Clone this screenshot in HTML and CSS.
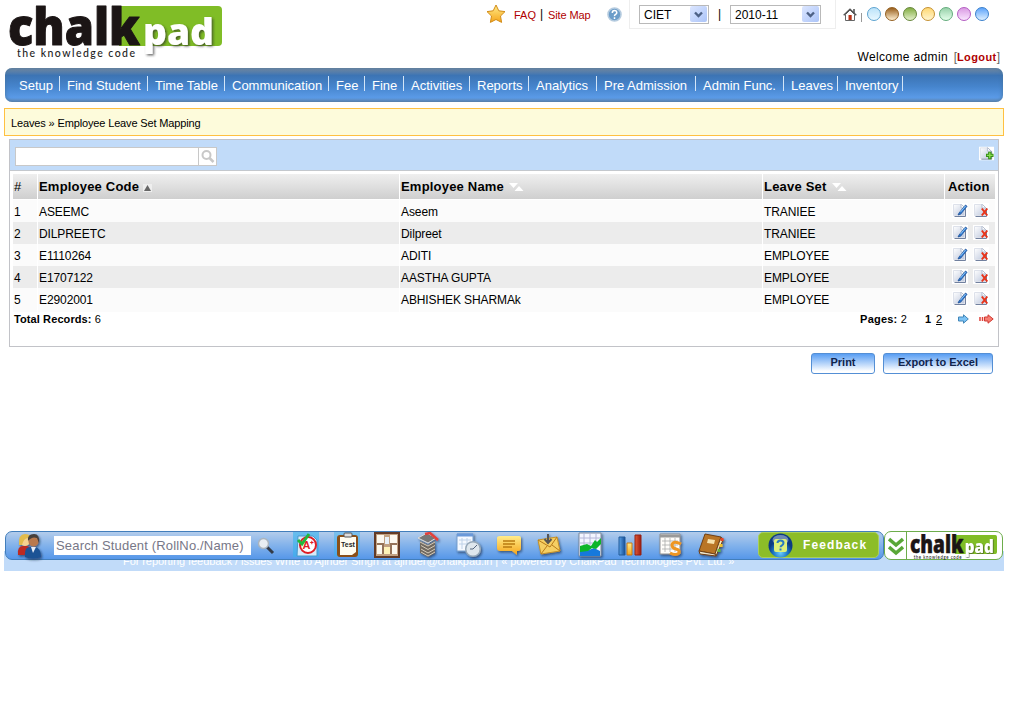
FILE: index.html
```html
<!DOCTYPE html>
<html lang="en">
<head>
<meta charset="utf-8">
<title>Employee Leave Set Mapping</title>
<link rel="stylesheet" href="styles.css">
</head>
<body>
<svg class="defs" aria-hidden="true">
  <defs>
    <linearGradient id="sheet" x2="1" y2="1"><stop stop-color="#fff"/><stop offset="1" stop-color="#bcc6dc"/></linearGradient>
    <linearGradient id="gold" x2="0" y2="1"><stop stop-color="#ffec8a"/><stop offset="1" stop-color="#f6a51a"/></linearGradient>
    <linearGradient id="red" x2="1" y2="0"><stop stop-color="#e05a38"/><stop offset="1" stop-color="#9c1c10"/></linearGradient>
    <linearGradient id="blue" x2="1" y2="0"><stop stop-color="#5ba4e8"/><stop offset="1" stop-color="#164d96"/></linearGradient>
    <radialGradient id="orb" cx=".5" cy=".8"><stop stop-color="#6dd0ff"/><stop offset=".6" stop-color="#1b75c5"/><stop offset="1" stop-color="#0c3b83"/></radialGradient>
    <filter id="shade" x="-20%" y="-20%" width="150%" height="150%"><feDropShadow dx="1.2" dy="1.5" stdDeviation="1" flood-color="#123" flood-opacity=".6"/></filter>
    <filter id="lift" x="-10%" y="-10%" width="130%" height="130%"><feDropShadow dx="1.5" dy="1.500" stdDeviation="1" flood-color="#222" flood-opacity=".65"/></filter>
  </defs>
  <symbol id="page" viewBox="0 0 16 15"><path fill="#fff" d="M0 0h16v15H0z"/><path d="M1.500 1.500h8l3 3v8H1.500z" fill="url(#sheet)" stroke="#dde1ea"/><path d="M9.500 1.500l4 4v8H2.500" fill="none" stroke="#71809e"/><path d="M9 1v4h4" fill="#fff" stroke="#b3bdd0"/></symbol>
  <symbol id="edit" viewBox="0 0 16 15"><use href="#page" width="16" height="15"/><path d="M7 10l6.500-8 1.600 1.300L8.700 11.200 6 12z" fill="#2f78cf" stroke="#174a92" stroke-width=".7"/><path d="M8.500 9l5-6" stroke="#8cc8fa"/></symbol>
  <symbol id="delete" viewBox="0 0 16 15"><use href="#page" width="16" height="15"/><path d="M8.800 5.500l5.500 7M14.300 5.500l-5.500 7" stroke="#e9341a" stroke-width="2"/></symbol>
  <symbol id="sort" viewBox="0 0 15 8"><path d="M0 0h9L4.500 5zM5.500 8l4.500-5 4.500 5z" fill="#fff"/></symbol>
  <symbol id="logo" viewBox="0 0 214 57">
    <path d="M111 2h99q4 0 4 4v32q0 4-4 4H111z" fill="#80bd26"/>
    <g font-family="Open Sans, sans-serif" font-weight="800" stroke-linejoin="round">
      <text x="0" y="41" font-size="51" textLength="132" lengthAdjust="spacingAndGlyphs" fill="#1b1515" stroke="#1b1515" stroke-width="1">chalk</text>
      <text x="135" y="41" font-size="37" textLength="71" lengthAdjust="spacingAndGlyphs" fill="#fff" filter="url(#lift)">pad</text>
    </g>
    <text x="9" y="53" font-family="Lato, sans-serif" font-weight="500" font-size="10.500" textLength="118" fill="#222">the knowledge code</text>
  </symbol>
</svg>

<div class="page">
  <header class="top">
    <svg class="logo"><use href="#logo"/></svg>
    <div class="account">
      <div class="tools">
        <svg class="star" viewBox="0 0 20 20"><path d="M10 1l2.800 5.800 6.200.8-4.500 4.400 1.100 6.400L10 15.500 4.400 18.400l1.100-6.400L1 7.600l6.200-.8z" fill="url(#gold)" stroke="#d28c18" stroke-linejoin="round"/></svg>
        <a class="faq">FAQ</a><span class="bar">|</span><a class="sitemap">Site Map</a>
        <svg class="help" viewBox="0 0 15 15"><circle cx="7.500" cy="7.500" r="6.500" fill="#6c9dc9" stroke="#b5cbdf" stroke-width="1.600"/><path d="M5.300 6q0-2.500 2.200-2.500T9.800 5.700q0 1-1.200 1.700T7.500 9.100M7.500 10.300v1.600" fill="none" stroke="#fff" stroke-width="1.500"/></svg>
        <div class="session">
          <span class="select select-college">CIET<i><svg viewBox="0 0 17 17"><path d="M5 6.500l3.500 3.500L12 6.500" fill="none" stroke="#4d6185" stroke-width="2.400"/></svg></i></span>
          <b class="divider">|</b>
          <span class="select select-year">2010-11<i><svg viewBox="0 0 17 17"><path d="M5 6.500l3.500 3.500L12 6.500" fill="none" stroke="#4d6185" stroke-width="2.400"/></svg></i></span>
        </div>
        <svg class="home" viewBox="0 0 14 14"><path d="M10 1h2v4h-2z" fill="#777"/><path d="M2.500 6.500v6h9v-6L7 2z" fill="#fff" stroke="#666"/><path d="M.7 7.300L7 1.200l6.300 6.100" fill="none" stroke="#555" stroke-width="1.400"/><path d="M5.500 7h3.200v5H5.500z" fill="#b83319"/></svg>
        <span class="tick"></span>
        <div class="themes"><i class="sky"></i><i class="brown"></i><i class="olive"></i><i class="amber"></i><i class="mint"></i><i class="violet"></i><i class="azure"></i></div>
      </div>
      <div class="welcome">Welcome admin <span>[<b>Logout</b>]</span></div>
    </div>
  </header>

  <nav class="menu"><a>Setup</a><a>Find Student</a><a>Time Table</a><a>Communication</a><a>Fee</a><a>Fine</a><a>Activities</a><a>Reports</a><a>Analytics</a><a>Pre Admission</a><a>Admin Func.</a><a>Leaves</a><a>Inventory</a></nav>
  <div class="crumbs">Leaves » Employee Leave Set Mapping</div>

  <main class="panel">
    <div class="toolbar">
      <div class="search"><span></span><svg viewBox="0 0 17 17"><circle cx="7.500" cy="7" r="4" fill="none" stroke="#c8c8c8" stroke-width="2"/><path d="M10.500 10l4 4" stroke="#c8c8c8" stroke-width="2.500"/></svg></div>
      <svg class="add" viewBox="0 0 16 15"><use href="#page" width="16" height="15"/><path d="M11.500 5.500v8M7.500 9.500h8" stroke="#358e16" stroke-width="3.500"/><path d="M11.500 6.500v6M8.500 9.500h6" stroke="#8be052" stroke-width="1.400"/></svg>
    </div>
    <div class="grid">
      <div class="row head"><span class="hash">#</span><span>Employee Code <svg class="asc" viewBox="0 0 9 8"><path fill="#eee" d="M0 0h9v8H0z"/><path d="M4.500 1L8 7H1z" fill="#666"/></svg></span><span>Employee Name <svg class="sort"><use href="#sort"/></svg></span><span>Leave Set <svg class="sort"><use href="#sort"/></svg></span><span class="action">Action</span></div>
      <div class="row"><span>1</span><span>ASEEMC</span><span>Aseem</span><span>TRANIEE</span><span class="acts"><svg><use href="#edit"/></svg><svg><use href="#delete"/></svg></span></div>
      <div class="row"><span>2</span><span>DILPREETC</span><span>Dilpreet</span><span>TRANIEE</span><span class="acts"><svg><use href="#edit"/></svg><svg><use href="#delete"/></svg></span></div>
      <div class="row"><span>3</span><span>E1110264</span><span>ADITI</span><span>EMPLOYEE</span><span class="acts"><svg><use href="#edit"/></svg><svg><use href="#delete"/></svg></span></div>
      <div class="row"><span>4</span><span>E1707122</span><span>AASTHA GUPTA</span><span>EMPLOYEE</span><span class="acts"><svg><use href="#edit"/></svg><svg><use href="#delete"/></svg></span></div>
      <div class="row"><span>5</span><span>E2902001</span><span>ABHISHEK SHARMAk</span><span>EMPLOYEE</span><span class="acts"><svg><use href="#edit"/></svg><svg><use href="#delete"/></svg></span></div>
    </div>
    <div class="paging">
      <div class="total"><b>Total Records:</b> 6</div>
      <div class="pages"><b>Pages:</b> 2</div><b class="current">1</b><u>2</u>
      <svg class="next" viewBox="0 0 11 10"><path d="M.5 3h5V.8L10.300 5 5.500 9.200V7h-5z" fill="#7cc3f5" stroke="#4286b8"/></svg>
      <svg class="last" viewBox="0 0 15 10"><path d="M1 3v4M3.500 3v4" stroke="#df4038" stroke-width="1.500"/><path d="M5.500 3H9V.8L14.200 5 9 9.200V7H5.500z" fill="#f77d72" stroke="#d03a32"/></svg>
    </div>
  </main>
  <div class="buttons"><button class="print">Print</button><button class="export">Export to Excel</button></div>

  <footer class="footer">
    <p>For reporting feedback / issues Write to Ajinder Singh at ajinder@chalkpad.in | « powered by ChalkPad Technologies Pvt. Ltd. »</p>
    <div class="dock">
      <div class="dockbar">
        <svg class="people" viewBox="0 0 26 26" filter="url(#shade)"><path d="M1 22q-1-9 5-9h4q5 1 5 9z" fill="#bd2923"/><circle cx="8" cy="8" r="5" fill="#f5d391"/><path d="M2 12Q1 1 8 1t7 8l-3-4Q7 4 5 12z" fill="#e2bc4e"/><path d="M8 24q-1-10 5-10h5q6 1 6 10-8 3-16 0z" fill="#1f5295"/><circle cx="16.500" cy="8.500" r="5" fill="#b9794d"/><path d="M11 8q-1-7 6-7 6 0 5 9l-2-5q-5-2-9 3z" fill="#453f3c"/><path d="M14 14l2 6 3-6z" fill="#e8edf5"/></svg>
        <div class="find">Search Student (RollNo./Name)</div>
        <svg class="lens" viewBox="0 0 18 18"><path d="M10 10l6 6" stroke="#333b48" stroke-width="3"/><circle cx="6.500" cy="6.500" r="5" fill="#e9eef2" stroke="#aab4be" stroke-width="1.500"/></svg>
        <div class="apps">
          <svg viewBox="0 0 26 26"><path d="M0 0h26v25H0z" fill="#37b4ef" opacity=".6"/><path d="M5 4h15l4 4v16H4z" fill="#d6eaf8" stroke="#4b96ca"/><circle cx="15" cy="13" r="8" fill="#fff" stroke="#df1d24" stroke-width="2"/><text x="9.500" y="17" class="grade">A⁺</text><path d="M5 8l4 4 7-10" fill="none" stroke="#20b83b" stroke-width="3"/></svg>
          <svg viewBox="0 0 26 26"><path d="M0 0h26v25H0z" fill="#37b4ef" opacity=".45"/><rect x="3" y="3" width="21" height="22" rx="3" fill="#8a4f17"/><path d="M6 5h16v15l-4 3H6z" fill="#fffdf0"/><rect x="10" y="1" width="8" height="4" rx="1" fill="#ddd" stroke="#555"/><text x="7" y="14.500" class="test">Test</text></svg>
          <svg viewBox="0 0 26 26"><path d="M1 1h24v24H1z" fill="#c2a283" stroke="#623b28" stroke-width="2"/><path d="M3 3h7v8H3zM16 3h7v8h-7zM3 13h5v9H3zM18 13h5v9h-5z" fill="#fcf8ef"/><path d="M11 5h4v7h-4z" fill="#e9f2fa"/><path d="M10 15h6v7h-6z" fill="#fff3b8"/><path d="M3 12h7M16 12h7M9 13v9M17 13v9" stroke="#66432f"/></svg>
          <svg viewBox="0 0 26 26" filter="url(#shade)"><path d="M3 6l9-5 9 5-8 5z" fill="#777" stroke="#ddd"/><path d="M5 9l8 4 7-4v12l-7 4-8-4z" fill="#71695f"/><path d="M5 10l8 4 7-4M6 13.500l7 4 7-4M6 17l7 4 7-4M6 20l7 4 7-4" fill="none" stroke="#d5cbbb"/><path d="M10 2l5-1 8 7" fill="none" stroke="#e4403b" stroke-width="2.500"/></svg>
          <svg viewBox="0 0 26 26" filter="url(#shade)"><path d="M2 2h16v17H2z" fill="#f5f9ff" stroke="#779fcf"/><path d="M2 3h16" stroke="#6a99d9" stroke-width="3"/><path d="M4 8h12M4 12h12M7 6v11M12 6v11" stroke="#bfd2e8"/><circle cx="18" cy="17" r="7.300" fill="#dfe7ed" stroke="#96a8b8" stroke-width="1.500"/><path d="M18 17l4-4M18 17h-3" stroke="#52647b"/></svg>
          <svg viewBox="0 0 26 26" filter="url(#shade)"><path d="M4 4h19q2 0 2 2v10q0 3-3 3h-1v4l-5-4H4q-3 0-3-3V6q0-2 3-2z" fill="url(#gold)"/><path d="M7 9h12M7 12h12M7 15h9" stroke="#b97b12" stroke-width="1.300"/></svg>
          <svg viewBox="0 0 26 26" filter="url(#shade)"><path d="M2 8l19-3 3 14-19 3z" fill="#f5cf63" stroke="#c69127"/><path d="M2 8l12 7 7-10M5 22l6-8M24 19l-8-6" fill="none" stroke="#b87a19"/><path d="M12 2v8M8.500 7l3.500 4 3.500-4" fill="none" stroke="#555" stroke-width="2"/></svg>
          <svg viewBox="0 0 26 26" filter="url(#shade)"><path d="M2 1h22v23H2z" fill="#f3f5ff" stroke="#7a8a9e"/><path d="M7 1v12M13 1v12M19 1v12M2 6h22M2 11h22" stroke="#b4b6d7"/><path d="M3 19l9-1 5-2 6 3v5H3z" fill="#1479dc"/><path d="M3 14l7-2 4 2 4-6 2 2 4-4v6l-5 5-4-1-4 3-8 1z" fill="#0bb52b"/></svg>
          <svg viewBox="0 0 26 26"><path d="M2 5h6v18H2z" fill="url(#blue)" stroke="#225a98"/><path d="M10 11h5v12h-5z" fill="url(#gold)" stroke="#c77917"/><path d="M18 3h6v20h-6z" fill="url(#red)" stroke="#922014"/></svg>
          <svg viewBox="0 0 26 26" filter="url(#shade)"><path d="M2 2h20v20H2z" fill="#fffdfa" stroke="#8d8e91"/><path d="M2 4h20" stroke="#999" stroke-width="3"/><path d="M4 9h16M4 13h16M4 17h16M7 6v14M12 6v14M17 6v14" stroke="#aaa" stroke-width=".8"/><path d="M23 12q-8-4-9 1 0 3 4 4t3 4q-3 3-9 0" fill="none" stroke="#ee9622" stroke-width="3"/></svg>
          <svg viewBox="0 0 26 26" filter="url(#shade)"><path d="M7 2l16 3-6 17-16-3z" fill="#b97525" stroke="#704014"/><path d="M17 22l1 2 7-16-2-3z" fill="#f3e8c4" stroke="#704014"/><path d="M1 19l1 3 16 2-1-2z" fill="#eee5cc" stroke="#704014"/><path d="M10 7l7 1-1 4-7-1z" fill="#f8e2ac"/><path d="M24 6v3" stroke="#e64427" stroke-width="3"/><path d="M23 12v3" stroke="#f0c12d" stroke-width="3"/><path d="M21 17v3" stroke="#62b43c" stroke-width="3"/></svg>
        </div>
        <div class="feedback"><svg viewBox="0 0 25 26"><circle cx="12.500" cy="12.500" r="12" fill="url(#orb)"/><ellipse cx="12.500" cy="7" rx="8" ry="5" fill="#fff" opacity=".4"/><rect x="6" y="6" width="13" height="13" rx="2" fill="#dcf07c"/><path d="M9.500 10q0-2.500 3-2.500t3 2.500q0 1.500-1.500 2.300t-1.500 2M12.500 15.500v2" fill="none" stroke="#287cc1" stroke-width="2"/></svg>Feedback</div>
      </div>
      <div class="brand"><svg class="chevrons" viewBox="0 0 16 20"><path d="M1 3l7 6 7-6M1 11l7 6 7-6" fill="none" stroke="#59a737" stroke-width="3.500"/></svg><div class="minilogo"><svg viewBox="0 0 214 57" preserveAspectRatio="none"><use href="#logo" width="214" height="57"/></svg></div></div>
    </div>
  </footer>
</div>
</body>
</html>
```
FILE: styles.css
```css
* { box-sizing: border-box; }
body { margin: 0; background: #fff; font: 12px "Liberation Sans", Arial, sans-serif; color: #000; }
svg { display: block; flex: none; }
.defs { position: absolute; width: 0; height: 0; }
.page { width: 1020px; height: 718px; overflow: hidden; }

.top { display: flex; height: 68px; padding: 4px 0 0 8px; }
.logo { width: 214px; height: 57px; }
.account { width: 534px; margin: -4px 0 0 264px; }
.tools { display: flex; height: 29px; align-items: flex-start; }
.star { width: 20px; height: 20px; margin-top: 4px; }
.tools a { font-size: 11px; letter-spacing: -.1px; color: #b00000; margin-top: 9px; white-space: nowrap; line-height: 13px; }
.tools .faq { width: 26px; margin-left: 8px; letter-spacing: 0; }
.bar { width: 8px; margin-top: 8px; line-height: 13px; }
.sitemap { width: 59px; }
.help { width: 15px; height: 15px; margin-top: 7px; }
.session { display: flex; width: 207px; height: 29px; margin-left: 7px; padding: 5px 0 0 9px; border: 1px solid #eee; border-top: 0; }
.select { display: flex; justify-content: space-between; height: 19px; padding: 0 1px 1px 4px; border: 1px solid #b9b9b9; line-height: 18px; }
.select-college { width: 70px; }
.select-year { width: 91px; }
.select i { width: 17px; height: 16px; border-radius: 2px; background: linear-gradient(135deg, #dce6ff, #abc4f8); }
.divider { width: 21px; text-align: center; font-weight: 400; line-height: 19px; }
.home { width: 14px; height: 14px; margin: 8px 0 0 7px; }
.tick { width: 1px; height: 9px; margin: 13px 5px 0 4px; background: #999; }
.themes { display: flex; gap: 4px; margin-top: 7px; }
.themes i { width: 14px; height: 14px; border: 1px solid; border-radius: 50%; }
.sky { color: #5ca3d0; background: linear-gradient(#bce3f9, #e9f8ff); }
.brown { color: #946020; background: linear-gradient(#985e1c, #fff0d2); }
.olive { color: #66863a; background: linear-gradient(#82ad42, #e4f0cc); }
.amber { color: #c59030; background: linear-gradient(#ffd873, #fff5cf); }
.mint { color: #62ac7b; background: linear-gradient(#98d1aa, #e4ffeb); }
.violet { color: #b35cc2; background: linear-gradient(#da9be3, #fae5ff); }
.azure { color: #397fcc; background: linear-gradient(#5da4fb, #def0ff); }
.welcome { width: 514px; margin-top: 21px; text-align: right; font-size: 12px; letter-spacing: .36px; line-height: 15px; white-space: nowrap; }
.welcome span { margin-left: 2px; color: #666; letter-spacing: 0; }
.welcome b { color: #b00000; font-size: 11px; letter-spacing: .4px; }

.menu { display: grid; grid-template-columns: 48px 88px 77px 104px 36px 39px 66px 59px 68px 99px 88px 54px 65px; width: 998px; height: 34px; margin-left: 5px; padding: 8px 0 0 7px; border-radius: 7px; background: linear-gradient(#778ba0, #3c74b4 22%, #4685cd 55%, #5b9be8 88%, #668bb5); box-shadow: inset 0 0 4px #47749f; color: #fff; font-size: 13px; }
.menu a { height: 15px; padding-left: 7px; border-right: 1px solid #d3e5f8; line-height: 19px; white-space: nowrap; }
.crumbs { width: 1000px; height: 28px; margin: 6px 0 0 4px; padding-left: 6px; border: 1px solid #ffc041; background: #fdfbdb; font-size: 11px; letter-spacing: -.14px; line-height: 29px; }

.panel { width: 990px; height: 208px; margin: 3px 0 0 9px; border: 1px solid #c2c3c8; }
.toolbar { display: flex; justify-content: space-between; height: 31px; padding: 7px 4px 0 5px; border-bottom: 1px solid #c4c8cd; background: #c1dbf9; }
.search { display: flex; width: 202px; height: 19px; border: 1px solid #c8c8c8; background: #fff; }
.search span { width: 183px; border-right: 1px solid #c8c8c8; }
.search svg { width: 17px; height: 17px; }
.add { width: 15px; height: 15px; margin-top: -1px; }
.grid { padding: 3px 3px 0; }
.row { display: grid; grid-template-columns: 24px 361px 362px 181px 50px; column-gap: 1px; height: 22px; line-height: 24px; letter-spacing: -.1px; }
.row span { background: #fbfbfb; padding-left: 1px; white-space: nowrap; }
.row:nth-child(odd) span { background: #ececec; }
.row .acts { display: flex; gap: 5px; padding: 3px 0 0 7px; }
.row .acts svg { width: 16px; height: 15px; }
.grid .head { height: 26px; padding-bottom: 1px; }
.grid .row.head span { display: flex; align-items: center; background: linear-gradient(#efefef, #cfcfcf); font-size: 13px; font-weight: 700; letter-spacing: .2px; }
.grid .row.head .hash { font-weight: 400; }
.row.head .action { padding-left: 3px; }
.asc { width: 9px; height: 8px; margin: 2px 0 0 4px; }
.sort { width: 15px; height: 8px; margin-left: 5px; }
.paging { display: flex; height: 20px; padding: 0 4px; font-size: 11px; line-height: 19px; }
.total { width: 847px; letter-spacing: .1px; }
.pages { width: 65px; letter-spacing: .2px; }
.current { width: 11px; }
.paging u { width: 22px; }
.next { width: 11px; height: 10px; margin-top: 4px; }
.last { width: 15px; height: 10px; margin: 4px 0 0 10px; }
.buttons { display: flex; gap: 8px; margin: 6px 0 0 811px; }
.buttons button { height: 21px; padding: 0; border: 1px solid #548fd5; border-radius: 3px; background: linear-gradient(#599ef3, #fff 90%); color: #10244d; font: bold 11px/17px "Liberation Sans", Arial, sans-serif; padding-bottom: 2px; }
.print { width: 64px; }
.export { width: 110px; }

.footer { position: relative; width: 1000px; height: 20px; margin: 177px 0 0 4px; background: #c1dbf9; color: #fff; font-size: 11px; }
.footer p { margin: 0 0 0 119px; line-height: 21px; letter-spacing: -.07px; white-space: nowrap; }
.dock { position: absolute; left: 1px; top: -20px; display: flex; width: 999px; height: 29px; }
.dockbar { display: flex; width: 879px; height: 29px; border: 1px solid #427ebb; border-radius: 7px; background: linear-gradient(#b3cceb, #82b2eb 50%, #5697e9); }
.people { width: 26px; height: 26px; margin: 1px 0 0 11px; }
.find { width: 197px; height: 19px; margin: 4px 0 0 11px; padding-left: 2px; background: #fff; color: #777787; font-size: 13px; letter-spacing: .17px; line-height: 20px; white-space: nowrap; }
.lens { width: 18px; height: 18px; margin: 5px 0 0 6px; }
.apps { display: flex; width: 434px; justify-content: space-between; margin: 0 0 0 16px; padding: 0 1px 0 2px; }
.apps svg { width: 26px; height: 26px; }
.grade { font: 700 11px "Liberation Sans", sans-serif; fill: #df1d24; }
.test { font: 700 7px "Liberation Sans", sans-serif; fill: #252525; }
.feedback { display: flex; gap: 10px; width: 121px; height: 26px; margin: 0 0 0 33px; padding-left: 9px; border: 1px solid #a9cf5c; border-radius: 5px; background: #8cbd28; font-size: 12px; font-weight: 700; letter-spacing: 1.1px; line-height: 25px; }
.feedback svg { width: 25px; height: 26px; }
.brand { display: flex; width: 119px; height: 29px; border: 1px solid #6dad4b; border-radius: 7px; background: #fff; }
.chevrons { width: 16px; height: 20px; margin: 4px 0 0 3px; }
.minilogo { margin-left: 2px; padding: 2px 0 0 3px; border-left: 1px solid #6dad4b; }
.minilogo svg { width: 87px; height: 27px; }
```
